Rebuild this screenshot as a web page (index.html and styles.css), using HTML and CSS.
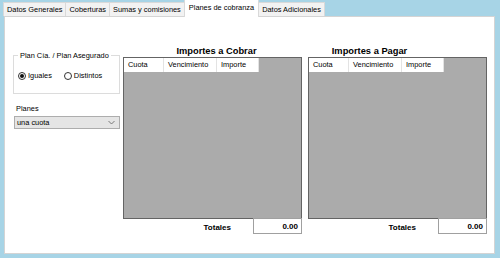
FILE: index.html
```html
<!DOCTYPE html>
<html lang="es">
<head>
<meta charset="utf-8">
<title>Planes de cobranza</title>
<link rel="stylesheet" href="styles.css">
</head>
<body>
<div class="window">
  <div class="tabs">
    <div class="tab">Datos Generales</div>
    <div class="tab">Coberturas</div>
    <div class="tab">Sumas y comisiones</div>
    <div class="tab active">Planes de cobranza</div>
    <div class="tab">Datos Adicionales</div>
  </div>
  <div class="panel">
    <div class="left">
      <fieldset class="group">
        <legend>Plan Cía. / Plan Asegurado</legend>
        <div class="radios">
          <span class="radio checked"></span><span class="rlabel">Iguales</span>
          <span class="radio"></span><span class="rlabel">Distintos</span>
        </div>
      </fieldset>
      <div class="label">Planes</div>
      <div class="combo">
        <span>una cuota</span>
        <svg class="chev" width="7" height="5" viewBox="0 0 7 5"><polyline points="0.5,1 3.5,4 6.5,1" fill="none" stroke="#6d6d6d" stroke-width="0.9"/></svg>
      </div>
    </div>
    <div class="section">
      <div class="title">Importes a Cobrar</div>
      <div class="grid">
        <div class="ghead">
          <div class="col c1">Cuota</div>
          <div class="col c2">Vencimiento</div>
          <div class="col c3">Importe</div>
        </div>
      </div>
      <div class="totals">
        <span class="tlabel">Totales</span>
        <div class="tbox">0.00</div>
      </div>
    </div>
    <div class="section second">
      <div class="title">Importes a Pagar</div>
      <div class="grid">
        <div class="ghead">
          <div class="col c1">Cuota</div>
          <div class="col c2">Vencimiento</div>
          <div class="col c3">Importe</div>
        </div>
      </div>
      <div class="totals">
        <span class="tlabel">Totales</span>
        <div class="tbox">0.00</div>
      </div>
    </div>
  </div>
</div>
</body>
</html>
```

FILE: styles.css
```css
html, body {
  margin: 0;
  padding: 0;
}
body {
  width: 500px;
  height: 258px;
  overflow: hidden;
  background: #a7d4e6;
  font-family: "Liberation Sans", Arial, sans-serif;
  font-size: 7.4px;
  color: #000;
}
.window {
  padding: 0 5px 0 3px;
}
.tabs {
  display: flex;
  align-items: flex-end;
  height: 16px;
}
.tab {
  height: 13px;
  line-height: 14px;
  padding: 0 3px;
  background: #f2f2f2;
  border: 1px solid #d9d9d9;
  border-bottom: none;
  margin-right: -1px;
  white-space: nowrap;
}
.tab.active {
  height: 17px;
  line-height: 15px;
  background: #fff;
  margin-bottom: -1px;
  position: relative;
  z-index: 1;
  padding: 0 4px;
}
.panel {
  margin-left: 1px;
  height: 236px;
  background: #fff;
  border: 1px solid #d4d4d4;
  display: flex;
  align-items: flex-start;
}
.left {
  width: 107px;
  margin-left: 8px;
  padding-top: 34px;
}
.group {
  margin: 0;
  min-width: 0;
  padding: 10px 3px 13px 3px;
  border: 1px solid #dcdcdc;
  width: 107px;
  box-sizing: border-box;
}
.group legend {
  padding: 0 2px;
  margin-left: 1px;
  line-height: 9px;
  color: #000;
}
.radios {
  display: flex;
  align-items: center;
  height: 9px;
  margin-top: 1px;
}
.radio {
  width: 8px;
  height: 8px;
  box-sizing: border-box;
  border: 1px solid #333;
  border-radius: 50%;
  display: flex;
  align-items: center;
  justify-content: center;
  margin-left: 1px;
}
.radio.checked::after {
  content: "";
  width: 4px;
  height: 4px;
  border-radius: 50%;
  background: #111;
}
.rlabel {
  margin-left: 2px;
  margin-right: 11px;
  line-height: 9px;
}
.label {
  margin-top: 10px;
  padding-left: 3px;
  line-height: 9px;
}
.combo {
  margin-top: 3px;
  margin-left: 1px;
  height: 13px;
  box-sizing: border-box;
  border: 1px solid #adadad;
  background: #e5e5e5;
  display: flex;
  align-items: center;
  justify-content: space-between;
  padding: 0 4px 0 2px;
}
.section {
  width: 179px;
  margin-left: 3px;
  padding-top: 29px;
  display: flex;
  flex-direction: column;
}
.section.second {
  margin-left: 6px;
}
.title {
  font-weight: bold;
  font-size: 9.3px;
  line-height: 11px;
  text-align: center;
  padding-left: 8px;
}
.section.second .title {
  padding-left: 0;
  padding-right: 56px;
}
.grid {
  height: 162px;
  box-sizing: border-box;
  border: 1px solid #646464;
  background: #ababab;
}
.ghead {
  display: flex;
  height: 14px;
}
.col {
  background: #fff;
  border-right: 1px solid #e3e3e3;
  line-height: 14px;
  padding-left: 4px;
  box-sizing: border-box;
  color: #000;
}
.c1 { width: 40px; }
.c2 { width: 53px; }
.c3 { width: 42px; }
.totals {
  display: flex;
  justify-content: flex-end;
  align-items: center;
  margin-top: -1px;
}
.tlabel {
  font-weight: bold;
  font-size: 8px;
  margin-right: 22px;
  padding-top: 2px;
}
.tbox {
  width: 49px;
  height: 16px;
  box-sizing: border-box;
  border: 1px solid #a0a0a0;
  background: #fff;
  font-weight: bold;
  font-size: 8px;
  text-align: right;
  padding-right: 3px;
  line-height: 16px;
}
```
